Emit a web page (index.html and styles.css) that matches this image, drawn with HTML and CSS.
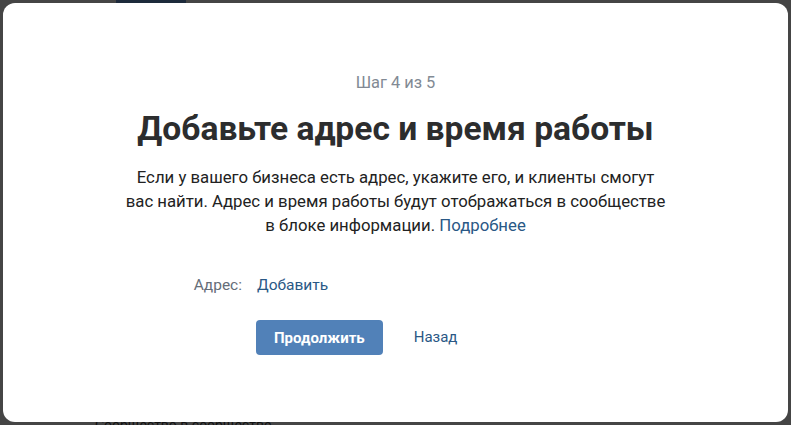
FILE: index.html
```html
<!DOCTYPE html>
<html>
<head>
  <meta charset="utf-8">
  <title>Шаг 4 из 5</title>
  <link rel="stylesheet" href="styles.css">
</head>
<body>

  <div class="backdrop">
    <div class="backdrop-bar"></div>
    <div class="backdrop-text">Сообщество в сообществе</div>
  </div>

  <div class="modal">
    <div class="step">Шаг 4 из 5</div>
    <h1 class="title">Добавьте адрес и время работы</h1>
    <p class="lead">
      Если у вашего бизнеса есть адрес, укажите его, и клиенты смогут<br>
      вас найти. Адрес и время работы будут отображаться в сообществе<br>
      в блоке информации. <a href="#" class="link">Подробнее</a>
    </p>

    <div class="field-row">
      <span class="field-label">Адрес:</span>
      <a href="#" class="link field-value">Добавить</a>
    </div>

    <div class="actions">
      <button class="btn-primary">Продолжить</button>
      <a href="#" class="link btn-back">Назад</a>
    </div>
  </div>

</body>
</html>
```

FILE: styles.css
```css
html, body {
  height: 100%;
}

body {
  margin: 0;
  background: #454545;
  font: 15px/1.4 Roboto, "Liberation Sans", sans-serif;
  color: #222;
  overflow: hidden;
  padding: 3px;
  box-sizing: border-box;
}

/* page content dimmed behind the modal */
.backdrop {
  position: absolute;
  inset: 0;
  z-index: 0;
}

.backdrop-bar {
  position: absolute;
  left: 116px;
  top: 0;
  width: 70px;
  height: 4px;
  background: #1d2a3b;
}

.backdrop-text {
  position: absolute;
  left: 95px;
  bottom: -8px;
  font-size: 14px;
  line-height: 16px;
  color: #111;
}

.modal {
  position: relative;
  z-index: 1;
  height: 100%;
  background: #fff;
  border-radius: 12px;
  text-align: center;
  padding-top: 69px;
  box-sizing: border-box;
}

.step {
  font-size: 16.4px;
  line-height: 22px;
  color: #828a94;
}

.title {
  margin: 14px 0 0;
  font-size: 33.6px;
  line-height: 42px;
  font-weight: 700;
  color: #2c2d2e;
}

.lead {
  margin: 15px auto 0;
  font-size: 16.75px;
  line-height: 24px;
  color: #222;
}

.link {
  color: #2a5885;
  text-decoration: none;
}

.field-row {
  display: flex;
  margin-top: 38px;
  font-size: 15.5px;
  line-height: 20px;
}

.field-label {
  width: 239px;
  text-align: right;
  color: #656d78;
}

.field-value {
  margin-left: 15px;
}

.actions {
  display: flex;
  align-items: center;
  margin-top: 25px;
  padding-left: 253px;
}

.btn-primary {
  height: 35px;
  padding: 0 18px;
  border: 0;
  border-radius: 4px;
  background: #5181b8;
  color: #fff;
  font: 700 15px Roboto, "Liberation Sans", sans-serif;
  cursor: pointer;
}

.btn-back {
  margin-left: 31px;
  font-size: 15px;
}
```
